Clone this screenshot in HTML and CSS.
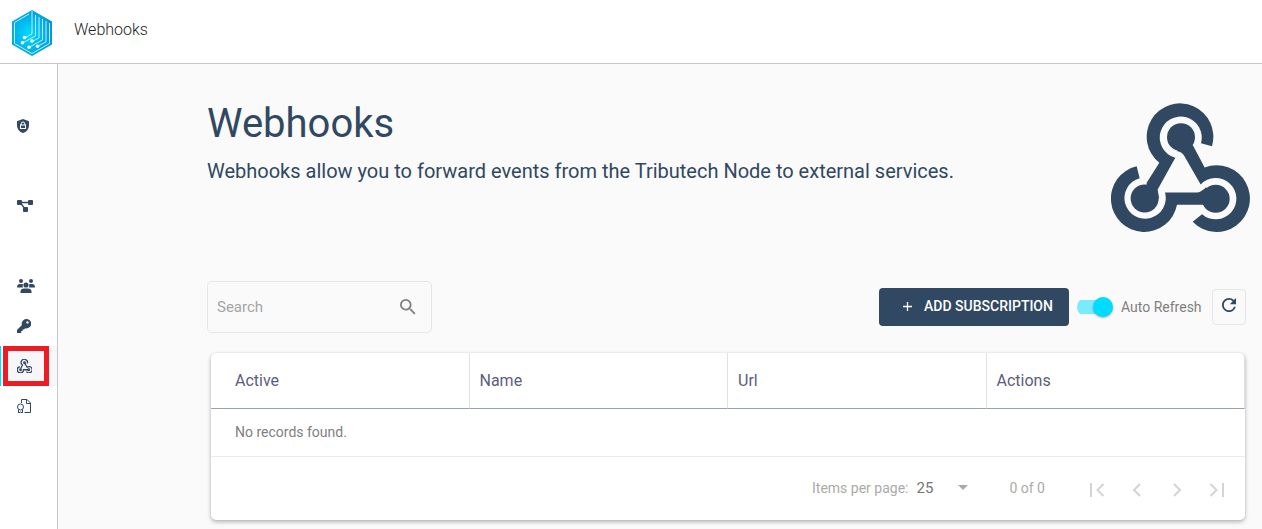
FILE: index.html
```html
<!DOCTYPE html>
<html lang="en">
<head>
<meta charset="utf-8">
<title>Webhooks</title>
<link rel="stylesheet" href="styles.css">
</head>
<body>
<svg class="defs" aria-hidden="true">
  <symbol id="webhook" viewBox="33 38 417 389">
    <path d="M336 167A100 100 0 1 0 178 217L140 277L140 324L177 324L173 297L226 202A63 63 0 1 1 303 158Z"/>
    <path d="M279 165L314 231A100 100 0 1 1 278 394L306 371A62 62 0 1 0 302 282L252 195Q246 184 232 182L243 140Z"/>
    <path d="M195 306H290Q304 305 318 290L347 325L308 343H231A100 100 0 1 1 110 227L119 263A62 62 0 1 0 195 306Z"/>
    <circle cx="243" cy="140" r="42"/><circle cx="134" cy="324" r="42"/><circle cx="347" cy="325" r="42"/>
  </symbol>
</svg>
<header class="topbar">
  <a class="logo" href="#" aria-label="Home">
    <svg viewBox="0 0 40 46" width="40" height="46">
      <defs>
        <radialGradient id="cube" cx=".42" cy=".52" r=".6"><stop offset="0" stop-color="#00dcff"/><stop offset="1" stop-color="#0098dc"/></radialGradient>
      </defs>
      <path fill="url(#cube)" d="M20 0L40 11.500V34.500L20 46L0 34.500V11.500Z"/>
      <g fill="none" stroke="#b9f1ff" stroke-width="1">
        <path d="M17 4L2.500 12.500V33.500L20 43.500L37.500 33.500V13"/>
        <path d="M20 1V24L12.500 28"/><path d="M23.500 5V26L10.500 33"/><path d="M27 7V28L20 31.500"/>
        <path d="M30.500 9V30L17.500 37"/><path d="M34 11V32L25 36.500"/>
      </g>
      <g fill="#fff"><circle cx="12.500" cy="27.500" r="1.800"/><circle cx="20" cy="31" r="1.800"/><circle cx="10.500" cy="32.700" r="1.800"/><circle cx="17" cy="37.300" r="1.800"/><circle cx="25.500" cy="36.300" r="1.800"/></g>
    </svg>
  </a>
  <span class="topbar-title">Webhooks</span>
</header>
<div class="shell">
  <nav class="sidebar" aria-label="Main">
    <div class="group">
      <a class="item" href="#" aria-label="Security">
        <svg viewBox="1 0 13 14" width="13" height="14"><path fill="#304861" d="M7 0L13 2.200V6C13 10 10.500 13 7 14C3.500 13 1 10 1 6V2.200Z"/><path d="M5.200 6V4.800a1.800 1.800 0 0 1 3.600 0V6" fill="none" stroke="#fff"/><rect x="4.500" y="6" width="5" height="3.500" fill="none" stroke="#fff"/></svg>
      </a>
    </div>
    <div class="group">
      <a class="item" href="#" aria-label="Network">
        <svg viewBox="0 0 16 12" width="16" height="12" fill="#304861"><rect width="5" height="5" rx="1"/><rect x="11" width="5" height="5" rx="1"/><rect x="6" y="7" width="5" height="5" rx="1"/><path d="M3 2.500H12M4 3.500L8 9" stroke="#304861" stroke-width="1.300" fill="none"/></svg>
      </a>
    </div>
    <div class="group">
      <a class="item" href="#" aria-label="Users">
        <svg viewBox="0 0 18 14" width="18" height="14" fill="#304861"><circle cx="4" cy="2" r="2"/><circle cx="14" cy="2" r="2"/><circle cx="9" cy="6" r="2.600"/><path d="M0 8.500C0 6 1 5 3 5H5Q5.600 5 6 5.400Q5.300 7 6 8.500ZM18 8.500C18 6 17 5 15 5H13Q12.400 5 12 5.400Q12.700 7 12 8.500ZM3.500 14V12.500C3.500 10.500 5 9.400 7 9.400H11C13 9.400 14.500 10.500 14.500 12.500V14Z"/></svg>
      </a>
      <a class="item" href="#" aria-label="Keys">
        <svg viewBox="0 0 14 14" width="14" height="14"><path fill="#304861" fill-rule="evenodd" d="M9.300 0A4.700 4.700 0 1 1 8.200 9.200L7 10.500H5.600V12H4.200V14H0V11L4.900 6.100A4.700 4.700 0 0 1 9.300 0ZM10.500 2.200A1.200 1.200 0 1 0 10.500 4.600A1.200 1.200 0 1 0 10.500 2.200Z"/></svg>
      </a>
      <a class="item active" href="#" aria-label="Webhooks" aria-current="page">
        <svg viewBox="0 0 30 28" width="15" height="14" fill="none" stroke="#304861" stroke-width="2.600"><path d="M20.500 9A6.300 6.300 0 1 0 11 12L7.500 19"/><path d="M15 8L20.500 16.500A6.200 6.200 0 1 1 19 25"/><path d="M23 21.500H13A6.200 6.200 0 1 1 5.500 15.500"/><circle cx="15" cy="7.500" r="1.600"/><circle cx="7" cy="21.500" r="1.600"/><circle cx="23.500" cy="21.500" r="1.600"/></svg>
        <span class="highlight"></span>
      </a>
      <a class="item" href="#" aria-label="Certificates">
        <svg viewBox="0 0 14 14" width="14" height="14" fill="none" stroke="#304861" stroke-width="1"><path d="M4.500 4V.500H10L13.500 4V13.500H7.500"/><path d="M9.500 .500V4.500H13.500"/><circle cx="3.500" cy="8" r="3"/><path d="M1.500 10.500V14L3.500 13L5.500 14V10.500"/></svg>
      </a>
    </div>
  </nav>
  <main class="main">
    <section class="hero">
      <div>
        <h1>Webhooks</h1>
        <p>Webhooks allow you to forward events from the Tributech Node to external services.</p>
      </div>
      <svg class="hero-icon" width="139" height="130" aria-hidden="true"><use href="#webhook"/></svg>
    </section>
    <div class="toolbar">
      <div class="search">
        <input type="text" placeholder="Search" aria-label="Search">
        <svg viewBox="3 3 18 18" width="16" height="16" fill="#808080"><path d="M15.500 14h-.79l-.28-.27A6.471 6.471 0 0 0 16 9.500 6.500 6.500 0 1 0 9.500 16c1.610 0 3.090-.59 4.230-1.570l.27.28v.79l5 4.990L20.490 19l-4.990-5zm-6 0C7.010 14 5 11.990 5 9.500S7.010 5 9.500 5 14 7.010 14 9.500 11.990 14 9.500 14z"/></svg>
      </div>
      <div class="actions">
        <button class="add" type="button">
          <svg viewBox="0 0 9 9" width="9" height="9"><path d="M4.500 0V9M0 4.500H9" stroke="#fff" stroke-width="1.300"/></svg>
          ADD SUBSCRIPTION
        </button>
        <label class="switch"><input type="checkbox" checked><span>Auto Refresh</span></label>
        <button class="refresh" type="button" aria-label="Refresh">
          <svg viewBox="4 4 16 16" width="14" height="14" fill="#304861"><path d="M17.650 6.350A7.958 7.958 0 0 0 12 4a8 8 0 1 0 7.730 10h-2.080A5.990 5.990 0 0 1 12 18a6 6 0 1 1 0-12c1.660 0 3.140.69 4.220 1.780L13 11h7V4l-2.350 2.350z"/></svg>
        </button>
      </div>
    </div>
    <section class="card">
      <table>
        <thead><tr><th>Active</th><th>Name</th><th>Url</th><th>Actions</th></tr></thead>
        <tbody><tr><td colspan="4">No records found.</td></tr></tbody>
      </table>
      <div class="pager">
        <label for="size">Items per page:</label>
        <div class="size">
          <select id="size"><option>25</option></select>
          <svg viewBox="0 0 10 5" width="10" height="5"><path fill="#aaa" d="M0 0H10L5 5Z"/></svg>
        </div>
        <span class="range">0 of 0</span>
        <div class="pages">
          <button type="button" disabled aria-label="First page"><svg viewBox="0 0 16 14" width="16" height="14"><path d="M2 0V14M14.500 1L8.500 7L14.500 13"/></svg></button>
          <button type="button" disabled aria-label="Previous page"><svg viewBox="0 0 16 14" width="16" height="14"><path d="M11 1L5 7L11 13"/></svg></button>
          <button type="button" disabled aria-label="Next page"><svg viewBox="0 0 16 14" width="16" height="14"><path d="M5 1L11 7L5 13"/></svg></button>
          <button type="button" disabled aria-label="Last page"><svg viewBox="0 0 16 14" width="16" height="14"><path d="M1.500 1L7.500 7L1.500 13M14 0V14"/></svg></button>
        </div>
      </div>
    </section>
  </main>
</div>
</body>
</html>
```
FILE: styles.css
```css
* { box-sizing: border-box; }
body {
  margin: 0;
  min-height: 100vh;
  display: flex;
  flex-direction: column;
  background: #fafafa;
  color: #304861;
  font-family: Roboto, "Liberation Sans", sans-serif;
}
button, input, select { font: inherit; color: inherit; }
svg { display: block; }
.defs { position: absolute; width: 0; height: 0; }
.topbar {
  display: flex;
  align-items: center;
  gap: 22px;
  height: 64px;
  padding: 2px 12px 0;
  background: #fff;
  border-bottom: 1px solid #c8c9cc;
}
.topbar-title { font-size: 16px; line-height: 24px; font-weight: 300; color: #222; padding-bottom: 5px; }
.shell { flex: 1; display: flex; }
.sidebar {
  width: 58px;
  flex: none;
  padding-top: 42px;
  background: #fff;
  border-right: 1px solid #c8c9cc;
}
.group { margin-bottom: 40px; }
.item { display: flex; align-items: center; height: 40px; padding-left: 17px; }
.active { position: relative; background: #f7f7fa; box-shadow: inset 1px 0 #00dcff; }
.highlight { position: absolute; inset: 0 8px 0 3px; border: 5px solid #ed1c24; }
.main { flex: 1; min-width: 0; padding: 32px 12px 9px 149px; }
.hero { display: flex; justify-content: space-between; align-items: flex-start; }
.hero > div { padding-top: 4px; }
h1 { margin: 0; font-size: 40px; line-height: 48px; font-weight: 400; }
.hero p { margin: 11px 0 0; font-size: 20px; line-height: 24px; }
.hero-icon { fill: #304861; margin-top: 7px; flex: none; }
.toolbar { display: flex; justify-content: space-between; align-items: center; margin-top: 48px; padding-right: 4px; }
.search {
  display: flex;
  align-items: center;
  width: 225px;
  height: 52px;
  padding: 0 15px 0 9px;
  border: 1px solid #e6e6e6;
  border-radius: 5px;
}
.search input { flex: 1; min-width: 0; padding: 0; border: 0; background: none; font-size: 15px; outline: 0; }
.search input::placeholder { color: #a5a5a5; opacity: 1; }
.actions { display: flex; align-items: center; gap: 8px; }
.add {
  display: flex;
  align-items: center;
  justify-content: center;
  gap: 12px;
  width: 190px;
  height: 38px;
  padding: 0 8px 2px 16px;
  border: 0;
  border-radius: 4px;
  background: #304861;
  color: #fff;
  font-size: 14px;
  font-weight: 500;
  white-space: nowrap;
}
.switch { display: flex; align-items: center; gap: 8px; font-size: 14px; line-height: 20px; color: #808080; }
.switch span { min-width: 83px; }
.switch input {
  appearance: none;
  width: 36px;
  height: 20px;
  margin: 0;
  background: linear-gradient(#7aebff, #7aebff) 0 3px / 30px 14px no-repeat;
  border-radius: 10px;
}
.switch input::before {
  content: "";
  display: block;
  width: 20px;
  height: 20px;
  margin-left: 16px;
  border-radius: 50%;
  background: #00dcff;
  box-shadow: 0 1px 2px rgba(0, 0, 0, .3);
}
.refresh {
  display: grid;
  place-items: center;
  width: 34px;
  height: 36px;
  padding: 0 0 4px;
  border: 1px solid #e6e6e6;
  border-radius: 4px;
  background: none;
}
.card {
  margin: 20px 5px 0 4px;
  background: #fff;
  border-radius: 5px;
  box-shadow: 0 2px 4px rgba(0, 0, 0, .28), 0 0 2px rgba(0, 0, 0, .08);
}
table { width: 100%; table-layout: fixed; border-collapse: separate; border-spacing: 0; }
th {
  height: 56px;
  padding: 0 10px;
  border-bottom: 1px solid #98a3b0;
  border-right: 1px solid #e0e0e0;
  text-align: left;
  font-size: 16px;
  font-weight: 400;
  color: #5c5c80;
}
th:first-child { padding-left: 24px; }
th:last-child { border-top-right-radius: 5px; }
td { height: 48px; padding: 0 24px 2px; border-bottom: 1px solid #ebebeb; font-size: 14px; color: #808080; }
.pager {
  display: flex;
  align-items: center;
  justify-content: flex-end;
  height: 63px;
  padding: 0 8px 2px 0;
  font-size: 14px;
  color: #aaa;
}
.size { display: flex; align-items: center; margin-left: 8px; width: 52px; }
.size select { appearance: none; flex: 1; min-width: 0; padding: 0; border: 0; background: none; font-size: 15px; color: #757575; }
.range { margin: 0 32px 0 41px; }
.pages { display: flex; }
.pages button { display: grid; place-items: center; width: 40px; height: 40px; padding: 4px 0 0; border: 0; background: none; }
.pages path { fill: none; stroke: #d4d4d4; stroke-width: 2; }
```
